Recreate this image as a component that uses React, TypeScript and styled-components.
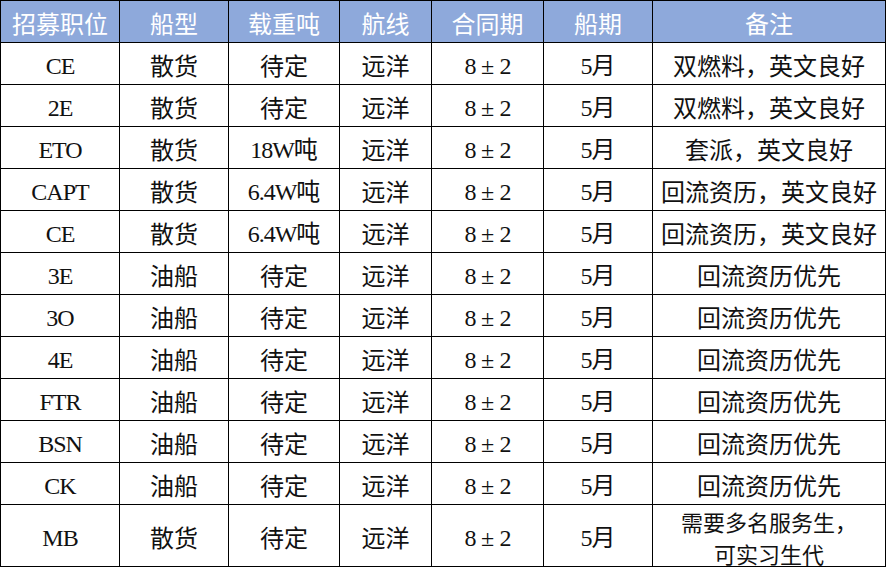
import React from 'react';
import styled, { createGlobalStyle } from 'styled-components';

const GlobalStyle = createGlobalStyle`
  html, body {
    margin: 0;
    padding: 0;
    background: #ffffff;
  }
`;

const Sheet = styled.div`
  display: grid;
  grid-template-columns: 118px 108px 110px 91px 111px 108px 232px;
  grid-template-rows: repeat(12, 41px) 61px;
  gap: 1px;
  padding: 1px;
  width: 886px;
  box-sizing: border-box;
  background: #000000;
  font-family: "Noto Sans CJK SC", sans-serif;
  font-size: 24px;
`;

const Cell = styled.div<{ $head?: boolean }>`
  display: flex;
  align-items: center;
  justify-content: center;
  text-align: center;
  padding-top: 2px;
  box-sizing: border-box;
  background: ${p => (p.$head ? '#8ea9db' : '#ffffff')};
  color: ${p => (p.$head ? '#ffffff' : '#111111')};
  line-height: 30px;
  white-space: nowrap;
`;

const Lines = styled.div<{ $multi?: boolean }>`
  display: flex;
  flex-direction: column;
  align-items: center;
  font-size: ${p => (p.$multi ? '22px' : '24px')};
  line-height: ${p => (p.$multi ? '32px' : '30px')};
`;

const Latin = styled.span`
  font-family: "Liberation Serif", serif;
  letter-spacing: -1px;
`;

const Sign = styled.span`
  font-family: "Liberation Serif", serif;
  display: inline-block;
  width: 24px;
  text-align: center;
`;

const headers = ['招募职位', '船型', '载重吨', '航线', '合同期', '船期', '备注'];

const rows: string[][] = [
  ['CE', '散货', '待定', '远洋', '8±2', '5月', '双燃料，英文良好'],
  ['2E', '散货', '待定', '远洋', '8±2', '5月', '双燃料，英文良好'],
  ['ETO', '散货', '18W吨', '远洋', '8±2', '5月', '套派，英文良好'],
  ['CAPT', '散货', '6.4W吨', '远洋', '8±2', '5月', '回流资历，英文良好'],
  ['CE', '散货', '6.4W吨', '远洋', '8±2', '5月', '回流资历，英文良好'],
  ['3E', '油船', '待定', '远洋', '8±2', '5月', '回流资历优先'],
  ['3O', '油船', '待定', '远洋', '8±2', '5月', '回流资历优先'],
  ['4E', '油船', '待定', '远洋', '8±2', '5月', '回流资历优先'],
  ['FTR', '油船', '待定', '远洋', '8±2', '5月', '回流资历优先'],
  ['BSN', '油船', '待定', '远洋', '8±2', '5月', '回流资历优先'],
  ['CK', '油船', '待定', '远洋', '8±2', '5月', '回流资历优先'],
  ['MB', '散货', '待定', '远洋', '8±2', '5月', '需要多名服务生，\n可实习生代'],
];

// Latin runs and the ± sign get their own faces, like the sheet's half-width glyphs
function renderText(text: string) {
  return text.split(/([A-Za-z0-9.]+|±)/).map((part, k) => {
    if (!part) return null;
    if (part === '±') return <Sign key={k}>±</Sign>;
    if (/^[A-Za-z0-9.]+$/.test(part)) return <Latin key={k}>{part}</Latin>;
    return <React.Fragment key={k}>{part}</React.Fragment>;
  });
}

export default function App() {
  return (
    <>
      <GlobalStyle />
      <Sheet>
        {headers.map(h => (
          <Cell key={h} $head>
            {h}
          </Cell>
        ))}
        {rows.map((r, i) =>
          r.map((v, j) => {
            const lines = v.split('\n');
            return (
              <Cell key={`${i}-${j}`}>
                <Lines $multi={lines.length > 1}>
                  {lines.map(line => (
                    <span key={line}>{renderText(line)}</span>
                  ))}
                </Lines>
              </Cell>
            );
          })
        )}
      </Sheet>
    </>
  );
}
